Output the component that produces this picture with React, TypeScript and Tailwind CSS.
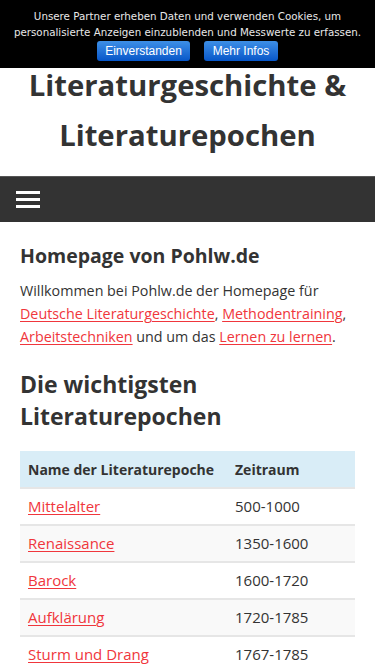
import React from "react";

const epochs = [
  { name: "Mittelalter", time: "500-1000" },
  { name: "Renaissance", time: "1350-1600" },
  { name: "Barock", time: "1600-1720" },
  { name: "Aufklärung", time: "1720-1785" },
  { name: "Sturm und Drang", time: "1767-1785" },
  { name: "Klassik", time: "1786-1832" },
];

const link = "text-[#f0363c] underline decoration-[#f0363c] underline-offset-2";

export default function App() {
  return (
    <div className="w-[375px] min-h-[667px] bg-white font-['Open_Sans',sans-serif] text-[#333]">
      {/* cookie banner */}
      <div className="relative z-10 h-[68px] bg-black pt-[8px] text-center">
        <p className="whitespace-nowrap font-['DejaVu_Sans',sans-serif] text-[10.3px] leading-[16px] text-[#e8e8e8]">
          Unsere Partner erheben Daten und verwenden Cookies, um
          <br />
          personalisierte Anzeigen einzublenden und Messwerte zu erfassen.
        </p>
        <div className="mt-[1px] flex justify-center gap-[14px] font-['Liberation_Sans',sans-serif] text-[12px] text-white">
          <button className="h-[20px] w-[93px] rounded-[3px] bg-gradient-to-b from-[#3d8fe6] to-[#0656c9]">
            Einverstanden
          </button>
          <button className="h-[20px] w-[74px] rounded-[3px] bg-gradient-to-b from-[#3d8fe6] to-[#0656c9]">
            Mehr Infos
          </button>
        </div>
      </div>

      {/* site title */}
      <h1 className="-mt-[8px] mb-[8px] h-[108px] text-center text-[29.3px] font-bold leading-[50px] text-[#333]">
        Literaturgeschichte &amp;
        <br />
        Literaturepochen
      </h1>

      {/* nav */}
      <nav className="flex h-[46px] items-center border-t border-[#555] bg-[#333] px-[16px]">
        <div className="flex w-[24px] flex-col gap-[4px]">
          <span className="h-[3px] bg-white" />
          <span className="h-[3px] bg-white" />
          <span className="h-[3px] bg-white" />
        </div>
      </nav>

      <main className="px-[20px] pt-[20px]">
        <h2 className="text-[19.5px] font-bold leading-[28px]">Homepage von Pohlw.de</h2>
        <p className="mt-[9px] text-[14.3px] leading-[23px]">
          Willkommen bei Pohlw.de der Homepage für{" "}
          <a className={link}>Deutsche Literaturgeschichte</a>,{" "}
          <a className={link}>Methodentraining</a>,{" "}
          <a className={link}>Arbeitstechniken</a> und um das{" "}
          <a className={link}>Lernen zu lernen</a>.
        </p>

        <h2 className="mt-[20px] text-[23px] font-bold leading-[32px]">
          Die wichtigsten
          <br />
          Literaturepochen
        </h2>

        <table className="mt-[19px] w-full border-collapse text-[15px]">
          <thead>
            <tr className="h-[37px] bg-[#d9edf7] text-left text-[14px] font-bold">
              <th className="w-[207px] px-[8px] font-bold">Name der Literaturepoche</th>
              <th className="px-[8px] font-bold">Zeitraum</th>
            </tr>
          </thead>
          <tbody>
            {epochs.map((e, i) => (
              <tr
                key={e.name}
                className={`h-[37px] border-t-2 border-[#e6e6e6] ${i % 2 === 1 ? "bg-[#f9f9f9]" : "bg-white"}`}
              >
                <td className="px-[8px]">
                  <a className={link}>{e.name}</a>
                </td>
                <td className="px-[8px]">{e.time}</td>
              </tr>
            ))}
          </tbody>
        </table>
      </main>
    </div>
  );
}
